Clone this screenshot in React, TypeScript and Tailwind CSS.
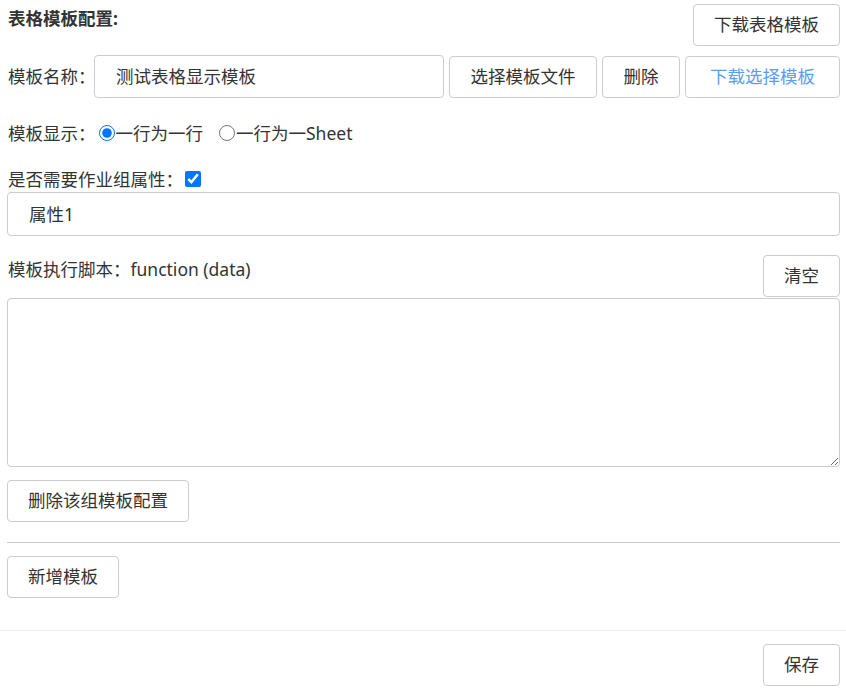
import React from "react";

const btn =
  "h-[42px] px-[20px] border border-[#ccc] rounded-[4px] bg-white text-[#333] text-[17.5px] leading-none whitespace-nowrap";

export default function App() {
  return (
    <div
      className="w-[846px] h-[693px] bg-white text-[#333] text-[17.5px]"
      style={{ fontFamily: '"Noto Sans", "Noto Sans CJK SC", sans-serif' }}
    >
      <div className="pl-[7px] pr-[6px]">
        <div className="flex justify-between items-start pt-[4px]">
          <div className="font-bold mt-[1px] leading-[26px] pl-[1px]">表格模板配置:</div>
          <button className={btn + " w-[147px]"}>下载表格模板</button>
        </div>

        <div className="flex items-center mt-[9px] h-[43px]">
          <div className="w-[87px] pl-[1px] whitespace-nowrap">模板名称：</div>
          <div className="w-[350px] h-[43px] border border-[#ccc] rounded-[4px] flex items-center pl-[21px]">
            测试表格显示模板
          </div>
          <div className="flex gap-[5px] ml-[5px]">
            <button className={btn + " w-[148px]"}>选择模板文件</button>
            <button className={btn + " w-[78px]"}>删除</button>
            <button className={btn + " w-[155px] !text-[#5b9cf4]"}>下载选择模板</button>
          </div>
        </div>

        <div className="flex items-center mt-[22px] h-[26px] pl-[1px]">
          <span className="mr-[3px]">模板显示：</span>
          <label className="flex items-center">
            <input type="radio" name="m" defaultChecked className="w-[16px] h-[16px] m-0 mr-[1px] accent-[#0075ff]" />
            <span>一行为一行</span>
          </label>
          <label className="flex items-center ml-[16px]">
            <input type="radio" name="m" className="w-[16px] h-[16px] m-0 mr-[1px]" />
            <span>一行为一Sheet</span>
          </label>
        </div>

        <div className="flex items-center mt-[20px] h-[26px] pl-[1px]">
          <span className="mr-[2px]">是否需要作业组属性：</span>
          <input type="checkbox" defaultChecked className="w-[16px] h-[16px] m-0 accent-[#0075ff]" />
        </div>

        <div className="mt-[0px] h-[44px] border border-[#ccc] rounded-[4px] flex items-center pl-[21px]">
          属性1
        </div>

        <div className="flex justify-between items-start mt-[19px]">
          <div className="leading-[26px] pt-[1px] pl-[1px]">模板执行脚本：function (data)</div>
          <button className={btn + " w-[77px]"}>清空</button>
        </div>

        <textarea className="block w-full h-[169px] mt-[1px] border border-[#ccc] rounded-[4px] outline-none" />

        <button className={btn + " mt-[13px] w-[182px]"}>删除该组模板配置</button>

        <div className="mt-[20px] border-t border-[#ccc]" />

        <button className={btn + " mt-[13px] w-[112px]"}>新增模板</button>
      </div>

      <div className="mt-[32px] border-t border-[#eee]" />

      <div className="flex justify-end pr-[6px] mt-[13px]">
        <button className={btn + " w-[77px]"}>保存</button>
      </div>
    </div>
  );
}
